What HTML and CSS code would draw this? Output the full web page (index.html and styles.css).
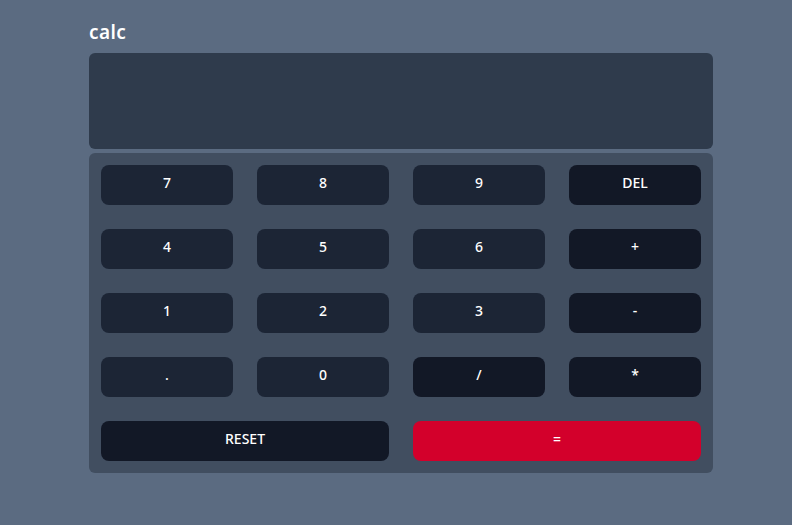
FILE: index.html
```html
<!DOCTYPE html>
<html>
<head>
<meta charset="utf-8">
<link rel="stylesheet" href="styles.css">
</head>
<body>
<main class="calc">
  <h1 class="title">calc</h1>
  <div class="display"></div>
  <div class="keypad">
    <button class="key">7</button>
    <button class="key">8</button>
    <button class="key">9</button>
    <button class="key dark">DEL</button>
    <button class="key">4</button>
    <button class="key">5</button>
    <button class="key">6</button>
    <button class="key dark">+</button>
    <button class="key">1</button>
    <button class="key">2</button>
    <button class="key">3</button>
    <button class="key dark">-</button>
    <button class="key">.</button>
    <button class="key">0</button>
    <button class="key dark">/</button>
    <button class="key dark">*</button>
    <button class="key dark wide">RESET</button>
    <button class="key red wide">=</button>
  </div>
</main>
</body>
</html>
```
FILE: styles.css
```css
html, body {
  margin: 0;
  padding: 0;
  background: #5b6b81;
  font-family: "Noto Sans", "Open Sans", sans-serif;
}
.calc {
  width: 624px;
  padding: 20px 0 0 89px;
}
.title {
  margin: 0 0 8px 0;
  height: 25px;
  font-size: 19px;
  line-height: 25px;
  font-weight: 600;
  color: #ffffff;
  letter-spacing: 0.4px;
}
.display {
  height: 96px;
  background: #2f3b4c;
  border-radius: 6px;
  margin-bottom: 4px;
}
.keypad {
  background: #414e60;
  border-radius: 6px;
  padding: 12px;
  display: grid;
  grid-template-columns: repeat(4, 132px);
  grid-auto-rows: 40px;
  gap: 24px;
}
.key {
  border: none;
  border-radius: 8px;
  background: #1c2535;
  color: #ffffff;
  font-family: "Noto Sans", "Open Sans", sans-serif;
  font-size: 14px;
  font-weight: 500;
  padding: 0 0 5px 0;
  display: flex;
  align-items: center;
  justify-content: center;
}
.key.dark {
  background: #121826;
}
.key.red {
  background: #d3002b;
}
.key.wide {
  grid-column: span 2;
}
```
